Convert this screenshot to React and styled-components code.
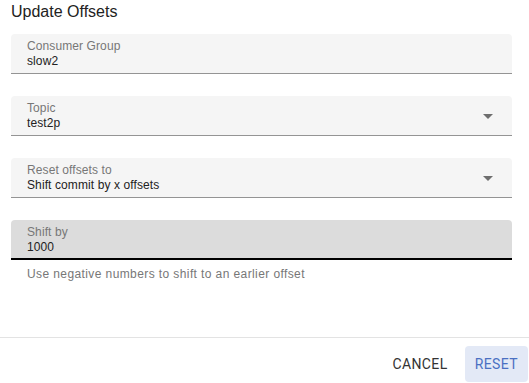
import React from "react";
import styled, { createGlobalStyle } from "styled-components";

const Global = createGlobalStyle`
  html, body { margin: 0; padding: 0; background: #fff; }
  body { font-family: "Liberation Sans", Arial, sans-serif; }
`;

const Dialog = styled.div`
  width: 529px;
  height: 383px;
  display: flex;
  flex-direction: column;
  box-sizing: border-box;
  overflow: hidden;
`;

const Content = styled.div`
  flex: 1;
  display: flex;
  flex-direction: column;
  padding: 2px 17px 0 11px;
`;

const Title = styled.h2`
  margin: 0 0 12px;
  font-size: 16px;
  line-height: 20px;
  font-weight: 400;
  color: #222;
`;

const Fields = styled.div`
  display: flex;
  flex-direction: column;
  gap: 22px;
`;

const Field = styled.div`
  display: flex;
  align-items: center;
  height: 40px;
  box-sizing: border-box;
  padding: 5px 12px ${(p) => (p.$focused ? "3px" : "4px")} 16px;
  background: ${(p) => (p.$focused ? "#dcdcdc" : "#f5f5f5")};
  border-radius: 4px 4px 0 0;
  border-bottom: ${(p) => (p.$focused ? "2px solid #000" : "1px solid #949494")};
`;

const FieldText = styled.div`
  flex: 1;
  display: flex;
  flex-direction: column;
  align-self: flex-start;
`;

const Label = styled.div`
  font-size: 12px;
  line-height: 15px;
  letter-spacing: 0.1px;
  color: ${(p) => (p.$focused ? "#222" : "#777")};
`;

const Value = styled.div`
  font-size: 12px;
  line-height: 15px;
  letter-spacing: 0.1px;
  color: #222;
`;

const Arrow = styled.svg`
  width: 24px;
  height: 24px;
  fill: #6e6e6e;
  flex: none;
`;

const Helper = styled.div`
  margin: 7px 0 0 16px;
  font-size: 12px;
  line-height: 15px;
  letter-spacing: 0.4px;
  color: #777;
`;

const Footer = styled.div`
  display: flex;
  justify-content: flex-end;
  align-items: center;
  gap: 7px;
  border-top: 1px solid #e3e3e3;
  padding: 8px 1px 1px;
`;

const Button = styled.button`
  height: 36px;
  padding: 0 10px;
  border: none;
  border-radius: 4px;
  font-family: Roboto, "Liberation Sans", sans-serif;
  font-size: 14px;
  letter-spacing: 0.4px;
  text-transform: uppercase;
  background: ${(p) => (p.$primary ? "#e3e9f6" : "transparent")};
  color: ${(p) => (p.$primary ? "#4a70c2" : "#333")};
  cursor: pointer;
`;

const TextField = ({ label, value, select, focused }) => (
  <Field $focused={focused}>
    <FieldText>
      <Label>{label}</Label>
      <Value>{value}</Value>
    </FieldText>
    {select && (
      <Arrow viewBox="0 0 24 24">
        <path d="M7 10l5 5 5-5z" />
      </Arrow>
    )}
  </Field>
);

export default function App() {
  return (
    <>
      <Global />
      <Dialog>
        <Content>
          <Title>Update Offsets</Title>
          <Fields>
            <TextField label="Consumer Group" value="slow2" />
            <TextField label="Topic" value="test2p" select />
            <TextField label="Reset offsets to" value="Shift commit by x offsets" select />
            <TextField label="Shift by" value="1000" focused />
          </Fields>
          <Helper>Use negative numbers to shift to an earlier offset</Helper>
        </Content>
        <Footer>
          <Button>Cancel</Button>
          <Button $primary>Reset</Button>
        </Footer>
      </Dialog>
    </>
  );
}
